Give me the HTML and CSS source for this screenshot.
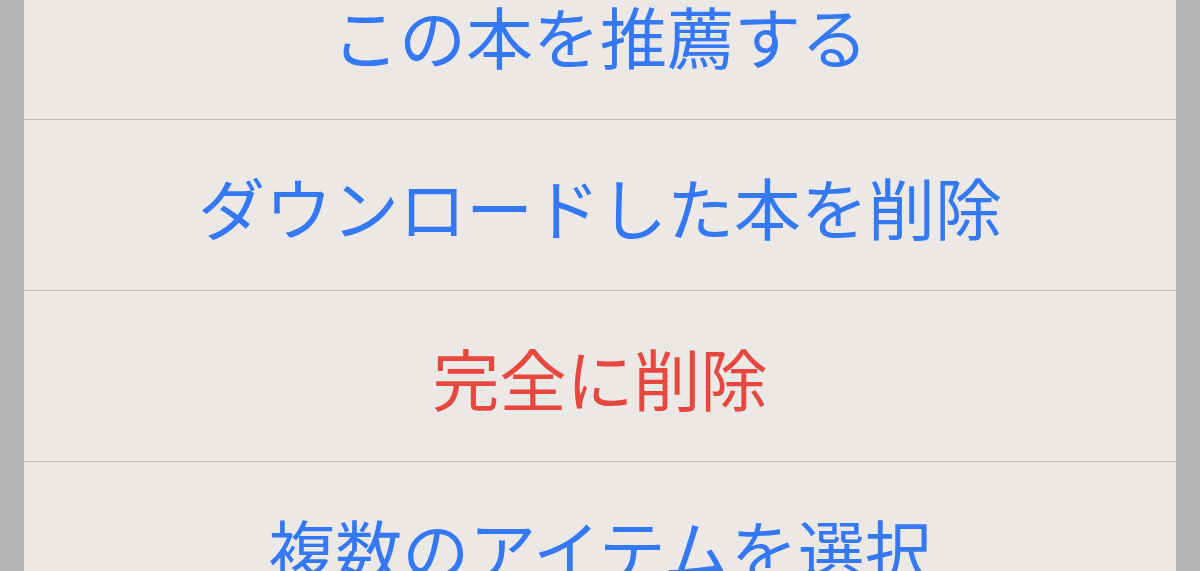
FILE: index.html
```html
<!DOCTYPE html>
<html lang="ja">
<head>
    <meta charset="UTF-8">
    <meta name="viewport" content="width=device-width, initial-scale=1.0">
    <title>Action Sheet</title>
    <link rel="stylesheet" href="styles.css">
</head>
<body>

<div class="sheet">
    <div class="action">この本を推薦する</div>
    <div class="action">ダウンロードした本を削除</div>
    <div class="action destructive">完全に削除</div>
    <div class="action">複数のアイテムを選択</div>
</div>

</body>
</html>
```

FILE: styles.css
```css
body {
    font-family: "Noto Sans CJK JP", "Noto Sans", sans-serif;
    background-color: #b4b4b4;
    margin: 0;
    padding: 0 24px;
    height: 571px;
    overflow: hidden;
}
.sheet {
    background-color: #ebe8e5;
    margin-top: -51px;
}
.action {
    height: 170px;
    border-bottom: 1px solid #bdb9b6;
    display: flex;
    justify-content: center;
    align-items: center;
    color: #3478f6;
    font-size: 67px;
    line-height: 1;
}
.action.destructive {
    color: #e8473f;
}
```
